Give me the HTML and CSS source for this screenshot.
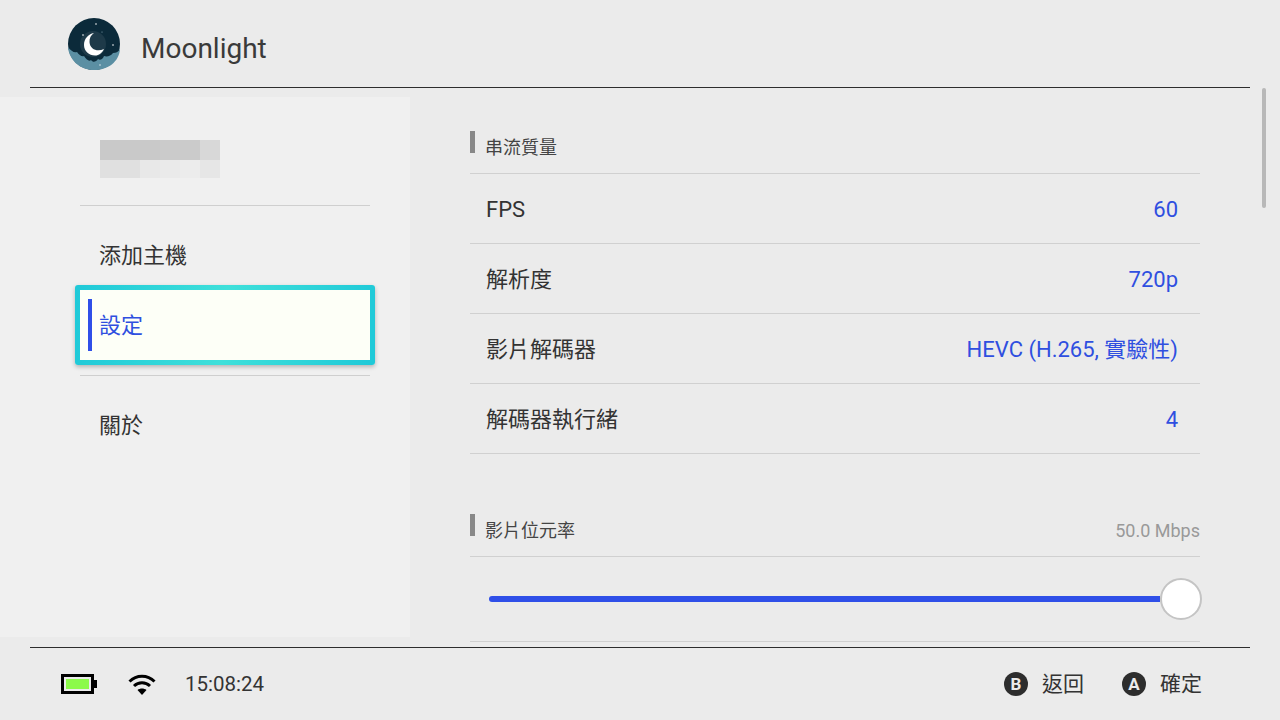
FILE: index.html
```html
<!DOCTYPE html>
<html lang="zh-Hant">
<head>
<meta charset="UTF-8">
<title>Moonlight</title>
<link rel="stylesheet" href="styles.css">
</head>
<body>
<div class="app">
  <header class="top-bar">
    <svg class="logo" viewBox="0 0 52 52" width="52" height="52">
      <circle cx="26" cy="26" r="26" fill="#0b2a3a"/>
      <path d="M0 29 C3 33 6 35 9 34 C11 37 14 39 16 38 C18 41 21 44 23 42 C25 45 28 44 30 41 C32 43 35 41 36 38 C39 39 43 38 45 35 C48 35 50 34 52 31 C51 44 40 52 26 52 C12 52 1 42 0 29 Z" fill="#5b8fa3"/>
      <circle cx="25" cy="26" r="13" fill="#fff" opacity="0.080"/>
      <path d="M26 15 C20 16 16 21 16 27 C16 33 21 37.500 27 37.500 C31 37.500 34 35 36 31 C30 34 22 32 21.500 24 C21.300 20 23 17 26 15 Z" fill="#fff"/>
      <circle cx="28" cy="6" r="0.800" fill="#fff"/>
      <circle cx="15" cy="17" r="0.800" fill="#fff"/>
      <circle cx="45" cy="27" r="0.800" fill="#fff"/>
      <circle cx="34" cy="14" r="0.500" fill="#9fc0cc"/>
      <circle cx="32" cy="47" r="0.800" fill="#d5e4ea"/>
    </svg>
    <span class="app-name">Moonlight</span>
  </header>

  <main class="main">
    <nav class="sidebar">
      <div class="account"></div>
      <hr class="side-line">
      <div class="side-item">添加主機</div>
      <div class="side-item active">設定</div>
      <hr class="side-line after-active">
      <div class="side-item">關於</div>
    </nav>

    <section class="content">
      <div class="section-title">
        <span class="title-text">串流質量</span>
      </div>
      <div class="row"><span>FPS</span><span class="value">60</span></div>
      <div class="row"><span>解析度</span><span class="value">720p</span></div>
      <div class="row"><span>影片解碼器</span><span class="value">HEVC (H.265, 實驗性)</span></div>
      <div class="row"><span>解碼器執行緒</span><span class="value">4</span></div>

      <div class="section-title second">
        <span class="title-text">影片位元率</span>
        <span class="title-value">50.0 Mbps</span>
      </div>
      <div class="slider-row">
        <div class="track"></div>
        <div class="thumb"></div>
      </div>
    </section>

    <div class="scrollbar"></div>
  </main>

  <footer class="bottom-bar">
    <div class="battery"><div class="battery-fill"></div></div>
    <svg class="wifi" viewBox="0 0 28 21" width="28" height="21">
      <path d="M1.500 7.500 C8.500 0.500 19.500 0.500 26.500 7.500" fill="none" stroke="#000" stroke-width="3"/>
      <path d="M6 12 C10.500 7.800 17.500 7.800 22 12" fill="none" stroke="#000" stroke-width="3"/>
      <path d="M9.500 16 C12 14 16 14 18.500 16 L14 21 Z" fill="#000"/>
    </svg>
    <span class="clock">15:08:24</span>
    <div class="hints">
      <span class="btn-icon">B</span><span class="hint-text">返回</span>
      <span class="btn-icon second-btn">A</span><span class="hint-text">確定</span>
    </div>
  </footer>
</div>
</body>
</html>
```

FILE: styles.css
```css
* {
box-sizing: border-box;
}

body {
margin: 0;
background: #ebebeb;
color: #333;
font-family: Roboto, "Noto Sans CJK TC", sans-serif;
line-height: 28px;
}

.app {
width: 1280px;
height: 720px;
display: flex;
flex-direction: column;
overflow: hidden;
}

.top-bar {
height: 88px;
margin: 0 30px;
padding: 1px 0 0 38px;
display: flex;
align-items: center;
gap: 21px;
border-bottom: 1px solid #2d2d2d;
}

.app-name {
margin-top: 10px;
font-size: 28px;
color: #3a3a3a;
}

.main {
height: 559px;
display: flex;
overflow: hidden;
}

.sidebar {
width: 410px;
margin: 9px 0 10px;
padding: 43px 40px 0 80px;
background: #f0f0f0;
flex-shrink: 0;
}

.account {
width: 120px;
height: 38px;
margin-left: 20px;
margin-bottom: 27px;
background:
  linear-gradient(90deg, #c9c9c9 0 60px, #cbcbcb 60px 100px, #d8d8d8 100px) top / 100% 20px no-repeat,
  linear-gradient(90deg, #e0e0e0 0 40px, #e8e8e8 40px 60px, #eaeaea 60px 80px, #ececec 80px 100px, #e6e6e6 100px) bottom / 100% 18px no-repeat;
}

.side-line {
margin: 0 0 14px;
border: none;
height: 1px;
background: #cfcfcf;
}

.side-line.after-active {
margin-top: 15px;
}

.side-item {
height: 70px;
padding: 2px 0 0 19px;
display: flex;
align-items: center;
font-size: 22px;
}

.side-item.active {
height: 80px;
margin: -5px;
position: relative;
color: #2f4fe0;
border: 5px solid transparent;
border-radius: 3px;
background:
  linear-gradient(#fdfff7, #fdfff7) padding-box,
  linear-gradient(95deg, #1fc9d8, #3fe0da 50%, #1fc9d8) border-box;
box-shadow: 0 2px 4px rgba(0,0,0,0.25);
}

.side-item.active::before {
content: "";
position: absolute;
left: 8px;
top: 9px;
width: 4px;
height: 52px;
background: #2f4fe8;
}

.content {
width: 730px;
margin-left: 60px;
padding-top: 43px;
flex-shrink: 0;
}

.section-title {
height: 43px;
display: flex;
justify-content: space-between;
border-bottom: 1px solid #d0d0d0;
position: relative;
padding-left: 15px;
padding-top: 3px;
font-size: 18px;
}

.section-title::before {
content: "";
position: absolute;
left: 0;
top: 0;
width: 5px;
height: 22px;
background: #888;
}

.section-title.second {
margin-top: 60px;
}

.title-text {
color: #444;
}

.title-value {
color: #999;
}

.row {
height: 70px;
padding: 2px 22px 0 16px;
display: flex;
justify-content: space-between;
align-items: center;
border-bottom: 1px solid #d0d0d0;
font-size: 22px;
}

.value {
color: #2f4fe0;
}

.slider-row {
height: 85px;
margin-right: -2px;
padding: 0 0 1px 19px;
display: flex;
align-items: center;
background: linear-gradient(#d0d0d0, #d0d0d0) 0 84px / 730px 1px no-repeat;
}

.track {
flex: 1;
height: 6px;
border-radius: 3px 0 0 3px;
background: #2f4fe8;
}

.thumb {
width: 42px;
height: 42px;
border-radius: 50%;
background: #fff;
border: 2px solid #c4c4c4;
}

.scrollbar {
width: 4px;
height: 120px;
margin-left: 62px;
border-radius: 2px;
background: #b8b8b8;
}

.bottom-bar {
height: 73px;
margin: 0 30px;
padding: 0 48px 0 31px;
display: flex;
align-items: center;
border-top: 1px solid #2d2d2d;
}

.battery {
width: 33px;
height: 20px;
border: 3px solid #000;
padding: 2px;
position: relative;
margin-right: 34px;
}

.battery::after {
content: "";
position: absolute;
left: 30px;
top: 3px;
width: 3px;
height: 8px;
background: #000;
}

.battery-fill {
height: 100%;
background: #8cfa4a;
}

.clock {
margin-left: 29px;
font-size: 20.500px;
}

.hints {
margin-left: auto;
display: flex;
align-items: center;
font-size: 21px;
}

.btn-icon {
width: 24px;
height: 24px;
border-radius: 50%;
background: #2d2d2d;
color: #ebebeb;
font-size: 17px;
font-weight: 700;
display: flex;
align-items: center;
justify-content: center;
margin-right: 14px;
}

.second-btn {
margin-left: 38px;
}
```
